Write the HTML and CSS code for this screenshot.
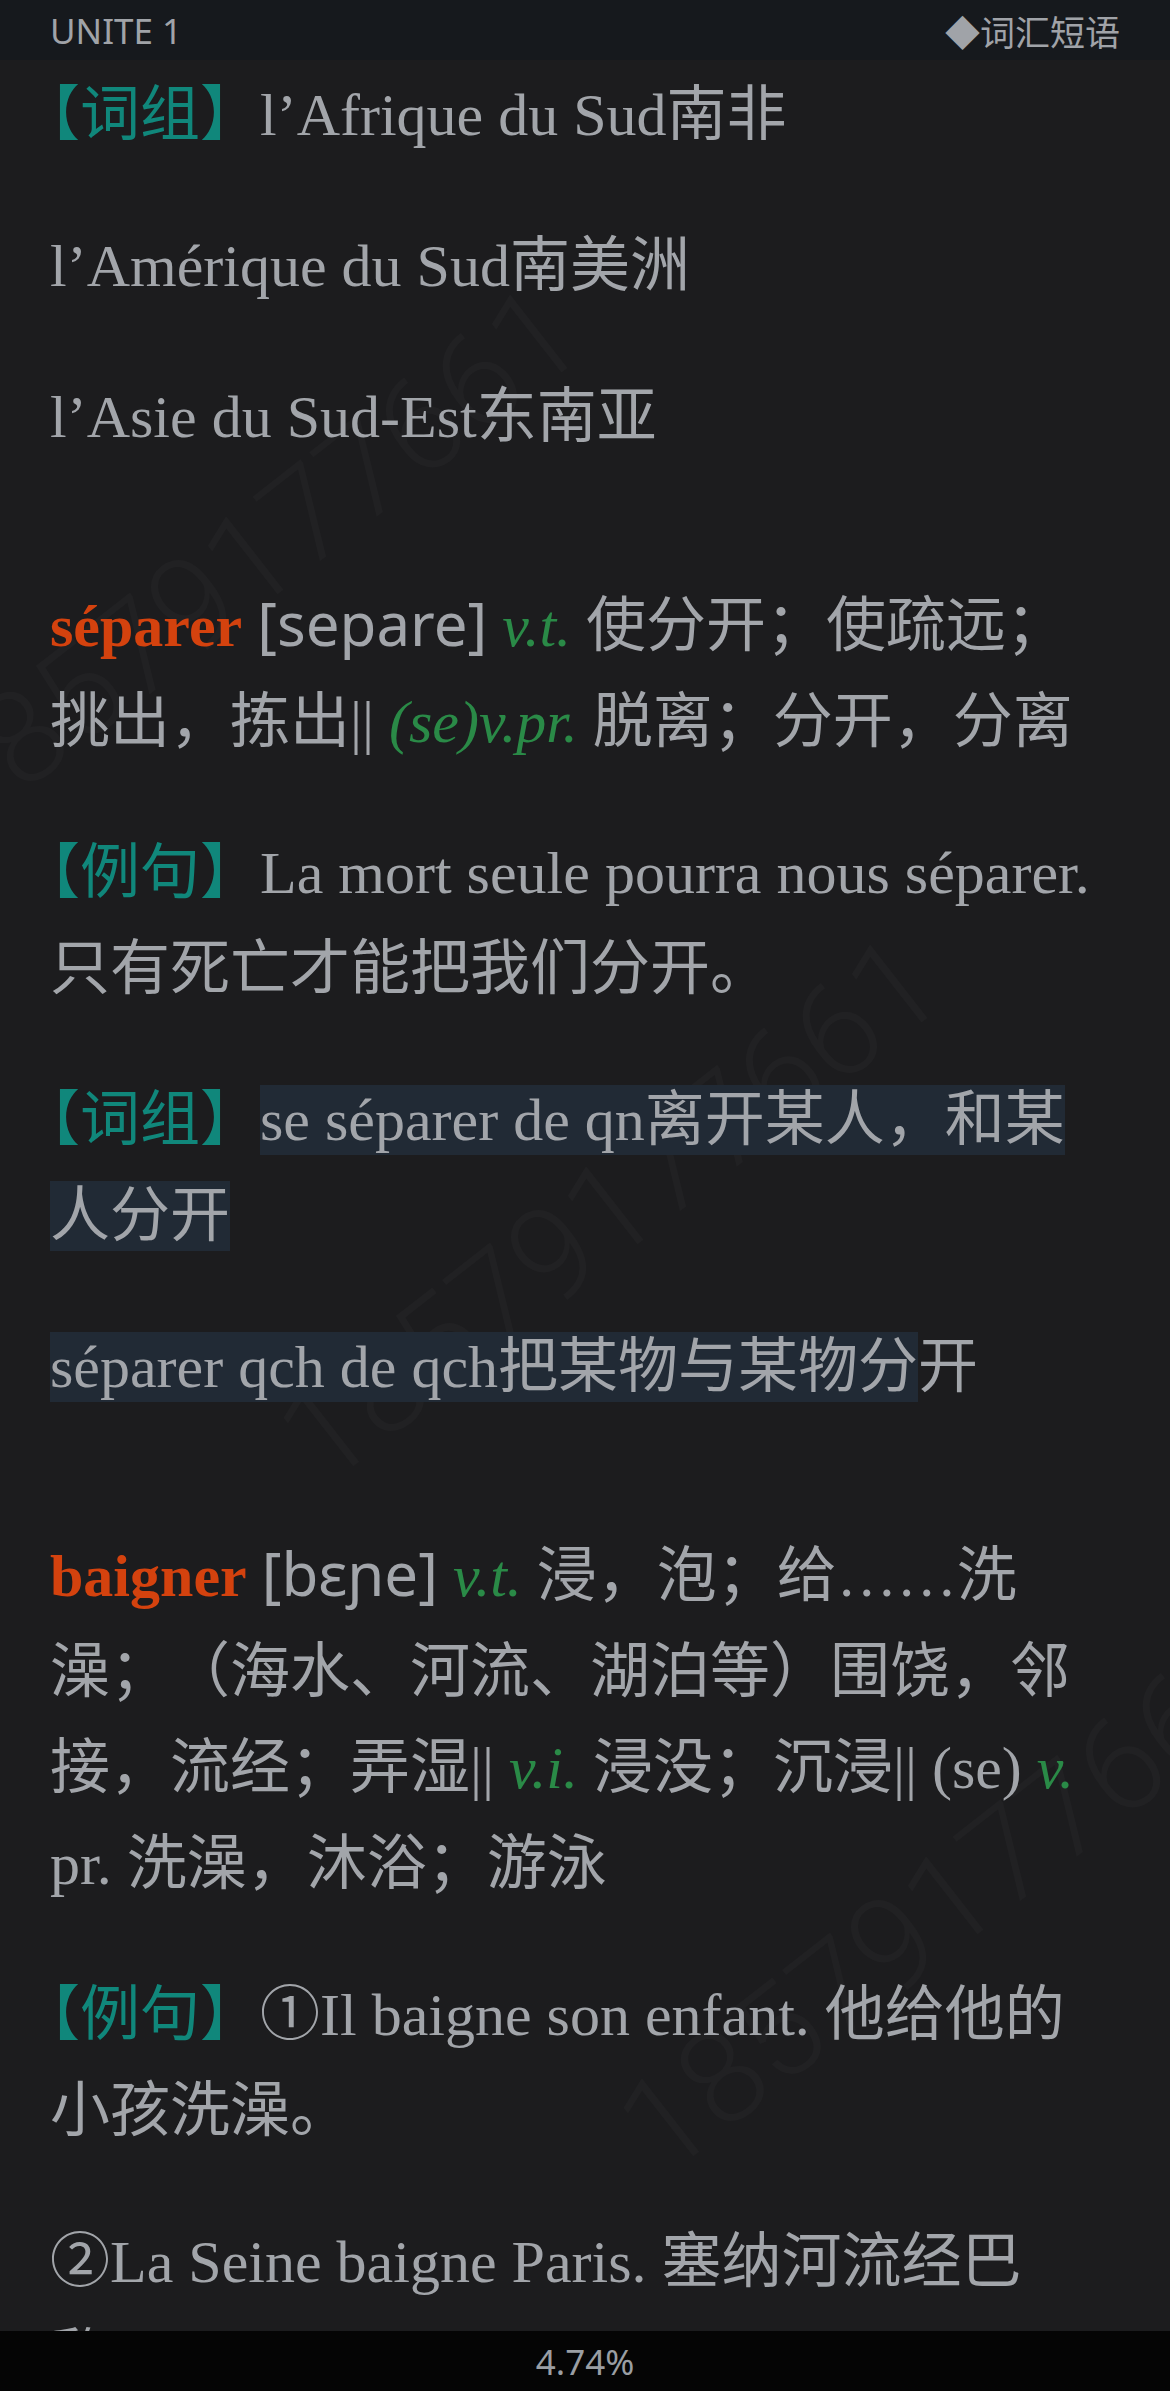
FILE: index.html
```html
<!DOCTYPE html>
<html lang="zh">
<head>
  <meta charset="UTF-8" />
  <meta name="viewport" content="width=device-width, initial-scale=1.0"/>
  <title>UNITE 1 - 词汇短语</title>
  <link rel="stylesheet" href="styles.css">
</head>
<body>

  <div class="screen">
    <header class="topbar">
      <span class="unit">UNITE 1</span>
      <span class="chapter">◆词汇短语</span>
    </header>

    <main class="page">
      <span class="watermark wm-1">18579177661</span>
      <span class="watermark wm-2">18579177661</span>
      <span class="watermark wm-3">18579177661</span>

      <p><span class="tag">【词组】</span>l’Afrique du Sud南非</p>
      <p>l’Amérique du Sud南美洲</p>
      <p>l’Asie du Sud-Est东南亚</p>

      <p class="new-entry"><b class="word">séparer</b> <span class="ipa">[separe]</span> <i class="pos">v.t.</i> 使分开；使疏远；<br>挑出，拣出|| <i class="pos">(se)v.pr.</i> 脱离；分开，分离</p>
      <p><span class="tag">【例句】</span>La mort seule pourra nous séparer.<br>只有死亡才能把我们分开。</p>
      <p><span class="tag">【词组】</span><span class="hl">se séparer de qn离开某人，和某<br>人分开</span></p>
      <p><span class="hl">séparer qch de qch把某物与某物分</span>开</p>

      <p class="new-entry"><b class="word">baigner</b> <span class="ipa">[bɛɲe]</span> <i class="pos">v.t.</i> 浸，泡；给……洗<br>澡；（海水、河流、湖泊等）围饶，邻<br>接，流经；弄湿|| <i class="pos">v.i.</i> 浸没；沉浸|| (se) <i class="pos">v.</i><br>pr. 洗澡，沐浴；游泳</p>
      <p><span class="tag">【例句】</span>①Il baigne son enfant. 他给他的<br>小孩洗澡。</p>
      <p>②La Seine baigne Paris. 塞纳河流经巴<br>黎。</p>
    </main>

    <footer class="progress">4.74%</footer>
  </div>

</body>
</html>
```

FILE: styles.css
```css
html, body {
  margin: 0;
  padding: 0;
  background-color: #1c1c1e;
}
body {
  width: 1170px;
  height: 100vh;
  overflow: hidden;
}
.screen {
  display: flex;
  flex-direction: column;
  height: 100%;
}
.topbar {
  height: 60px;
  flex: none;
  display: flex;
  align-items: center;
  justify-content: space-between;
  padding: 0 50px;
  background-color: #16191d;
  color: #a0a3a8;
  font-family: 'Noto Sans', 'Noto Sans CJK SC', sans-serif;
  font-size: 35px;
}
.chapter {
  font-family: 'Noto Sans CJK SC', sans-serif;
}
.page {
  flex: 1;
  position: relative;
  z-index: 0;
  overflow: hidden;
  padding: 7px 50px 0;
  font-family: 'Liberation Serif', 'Noto Sans CJK SC', serif;
  font-size: 60px;
  line-height: 96px;
  color: #a2a5aa;
  text-spacing-trim: space-all;
}
.page p {
  margin: 0 0 55px;
  white-space: nowrap;
}
.page p.new-entry {
  margin-top: 113px;
}
/* opening bracket sits half-width at the start of a line */
.tag {
  margin-left: -0.5em;
  line-height: 1;
  color: #10877b;
  font-family: 'Noto Sans CJK SC', sans-serif;
}
.word {
  color: #d4420e;
  font-weight: bold;
}
.ipa {
  line-height: 1;
  font-family: 'Noto Sans', 'DejaVu Sans', sans-serif;
}
.pos {
  color: #2a8a47;
  font-style: italic;
}
.hl {
  background-color: #212a35;
  padding: 2px 0;
}
.watermark {
  position: absolute;
  z-index: -1;
  font-family: Roboto, 'Noto Sans', sans-serif;
  font-weight: 300;
  font-size: 130px;
  line-height: 1;
  color: rgba(255, 255, 255, 0.022);
  white-space: nowrap;
  transform: translate(-50%, -50%) rotate(-38deg);
}
.wm-1 {
  left: 250px;
  top: 500px;
}
.wm-2 {
  left: 610px;
  top: 1150px;
}
.wm-3 {
  left: 950px;
  top: 1840px;
}
.progress {
  height: 60px;
  flex: none;
  display: flex;
  align-items: center;
  justify-content: center;
  background-color: #050505;
  color: #9a9ea3;
  font-family: 'Noto Sans', sans-serif;
  font-size: 35px;
}
```
